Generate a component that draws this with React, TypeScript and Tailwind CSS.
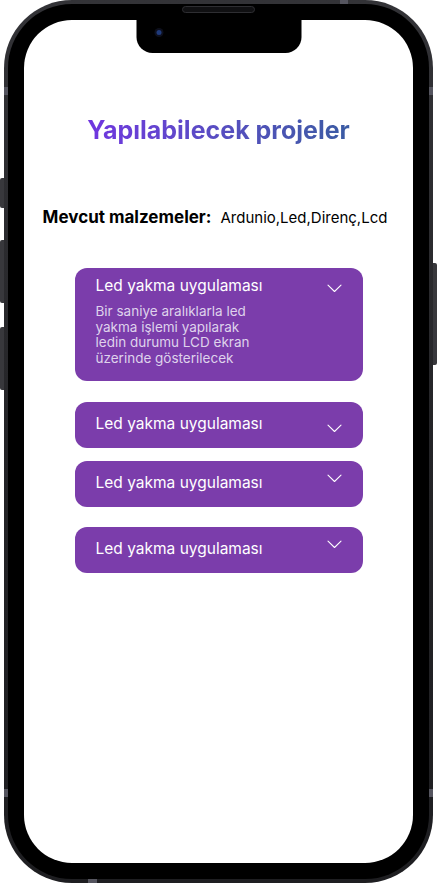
const projects = [
  {
    title: "Led yakma uygulaması",
    desc: "Bir saniye aralıklarla led yakma işlemi yapılarak ledin durumu LCD ekran üzerinde gösterilecek",
    gap: "mt-[38px]",
    chevron: "translate-y-[2px]",
  },
  { title: "Led yakma uygulaması", gap: "mt-[21px]", chevron: "translate-y-[4px]" },
  { title: "Led yakma uygulaması", gap: "mt-[13px]", chevron: "-translate-y-[5px]" },
  { title: "Led yakma uygulaması", gap: "mt-[20px]", chevron: "-translate-y-[5px]" },
];

function Chevron({ className }: { className?: string }) {
  return (
    <svg width="15" height="9" viewBox="0 0 15 9" className={className} fill="none">
      <path d="M1 1.2 L7.5 7.5 L14 1.2" stroke="white" strokeWidth="1.1" strokeLinecap="round" strokeLinejoin="round" />
    </svg>
  );
}

function ProjectCard({ p }: { p: (typeof projects)[number] }) {
  return (
    <div
      className={`${p.gap} w-[288px] rounded-[12px] bg-[#7b3dab] px-[21px] ${
        p.desc ? "pt-[8px] pb-[15px]" : "pt-[12px] pb-[14px]"
      }`}
    >
      <div className="flex items-center justify-between">
        <span className="text-[15.5px] leading-5 font-normal text-white">{p.title}</span>
        <Chevron className={p.chevron} />
      </div>
      {p.desc && (
        <p className="mt-[8px] w-[165px] text-[13.5px] leading-[15.5px] text-[#dfd2ec]">{p.desc}</p>
      )}
    </div>
  );
}

export default function App() {
  return (
    <div
      className="relative h-[884px] w-[437px] overflow-hidden bg-white"
      style={{ fontFamily: "Inter, 'Noto Sans', sans-serif" }}
    >
      {/* Side buttons */}
      <div className="absolute left-0 top-[178px] h-[30px] w-[5px] rounded-l-[2px] bg-[#38383c]" />
      <div className="absolute left-0 top-[240px] h-[63px] w-[5px] rounded-l-[2px] bg-[#38383c]" />
      <div className="absolute left-0 top-[327px] h-[63px] w-[5px] rounded-l-[2px] bg-[#38383c]" />
      <div className="absolute right-0 top-[263px] h-[102px] w-[5px] rounded-r-[2px] bg-[#38383c]" />

      {/* Phone frame */}
      <div className="absolute left-[4px] top-0 h-[883px] w-[429px] rounded-[68px] bg-gradient-to-b from-[#333337] via-[#242427] to-[#1e1e21] p-[4px]">
        <div className="h-full w-full rounded-[64px] bg-black p-[16px]">
          {/* Screen */}
          <div className="relative flex h-full w-full flex-col items-center overflow-hidden rounded-[48px] bg-white">
            {/* Notch */}
            <div className="absolute left-1/2 top-0 h-[33px] w-[165px] -translate-x-1/2 rounded-b-[16px] bg-black">
              <div className="absolute left-[18px] top-[8px] h-[9px] w-[9px] rounded-full bg-[#0d0f1c]">
                <div className="m-[2px] h-[5px] w-[5px] rounded-full bg-[#1f3a7a]" />
              </div>
            </div>

            <h1 className="mt-[94px] bg-gradient-to-r from-[#7035e0] to-[#3a5ba3] bg-clip-text text-[25px] leading-8 font-bold text-transparent">
              Yapılabilecek projeler
            </h1>

            <div className="mt-[60px] mr-[7px] flex h-6 items-center gap-[9px] whitespace-nowrap text-black">
              <span className="text-[17px] font-bold">Mevcut malzemeler:</span>
              <span className="text-[15px]">Ardunio,Led,Direnç,Lcd</span>
            </div>

            {projects.map((p, i) => (
              <ProjectCard key={i} p={p} />
            ))}
          </div>
        </div>
      </div>

      {/* Speaker */}
      <div className="absolute left-[182px] top-[6px] h-[7px] w-[73px] rounded-full border border-[#2e2e32] bg-[#101012]" />

      {/* Antenna bands */}
      <div className="absolute left-[340px] top-0 h-[4px] w-[8px] bg-[#55555f]" />
      <div className="absolute left-[4px] top-[87px] h-[8px] w-[4px] bg-[#55555f]" />
      <div className="absolute right-[4px] top-[87px] h-[8px] w-[4px] bg-[#55555f]" />
      <div className="absolute left-[4px] top-[789px] h-[8px] w-[4px] bg-[#55555f]" />
      <div className="absolute right-[4px] top-[789px] h-[8px] w-[4px] bg-[#55555f]" />
      <div className="absolute left-[88px] top-[879px] h-[4px] w-[9px] bg-[#55555f]" />
    </div>
  );
}
